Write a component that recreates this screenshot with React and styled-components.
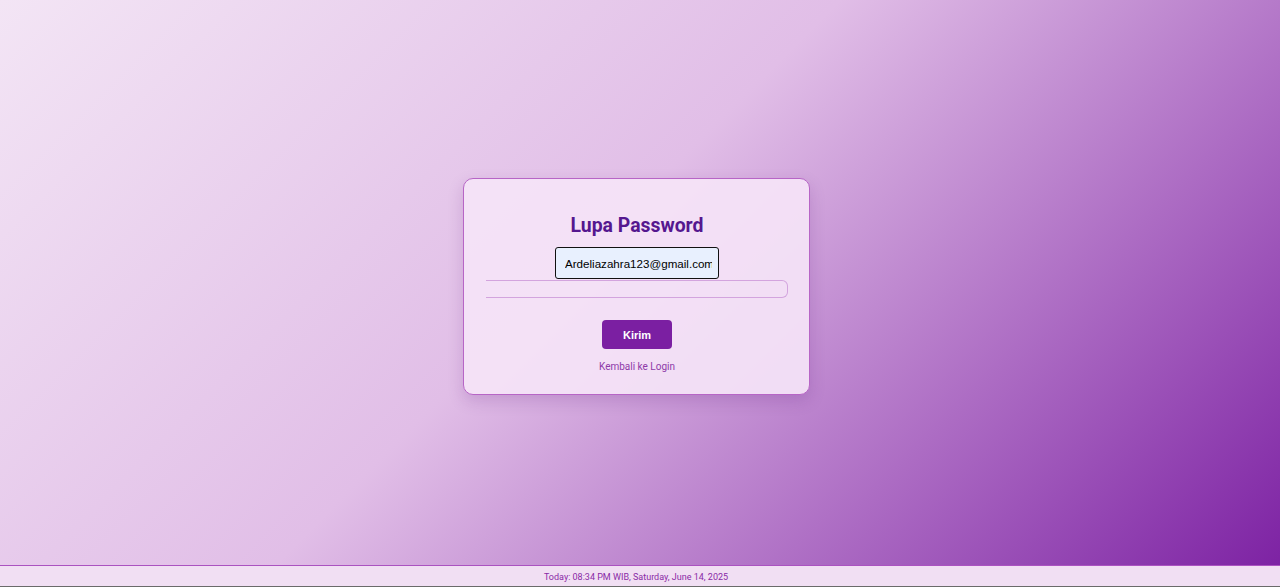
import styled, { createGlobalStyle } from "styled-components";

const GlobalStyle = createGlobalStyle`
    html, body {
        margin: 0;
        padding: 0;
        height: 100%;
    }

    body {
        font-family: Roboto, "Liberation Sans", Arial, sans-serif;
    }

    #root {
        height: 100%;
    }
`;

const Page = styled.div`
    display: flex;
    flex-direction: column;
    height: 100vh;
    background: linear-gradient(135deg, #f3e5f5 0%, #e1bee7 45%, #7b1fa2 100%);
    overflow: hidden;
`;

const Main = styled.main`
    flex: 1;
    display: flex;
    align-items: center;
    justify-content: center;
    padding: 8px 7px 0 0;
`;

const Card = styled.div`
    box-sizing: border-box;
    width: 347px;
    padding: 34px 21px 21px 22px;
    background: rgba(245, 228, 247, 0.92);
    border: 1px solid #b765c6;
    border-radius: 10px;
    box-shadow: 0 6px 16px rgba(90, 20, 120, 0.18);
    display: flex;
    flex-direction: column;
    align-items: center;
`;

const Title = styled.h2`
    margin: 1px 0 9px;
    font-size: 19.4px;
    line-height: 24px;
    font-weight: 700;
    color: #55178f;
`;

const EmailInput = styled.input`
    box-sizing: border-box;
    width: 164px;
    height: 32px;
    padding: 0 6px 0 9px;
    font-family: Arial, "Liberation Sans", sans-serif;
    font-size: 11.6px;
    color: #000;
    background: #e8f0fe;
    border: 1px solid #111;
    border-radius: 3px;
    outline: none;
`;

const FieldBar = styled.div`
    box-sizing: border-box;
    align-self: stretch;
    height: 18px;
    margin-top: 1px;
    border: 1px solid #d3a4de;
    border-left: none;
    border-radius: 0 6px 6px 0;
`;

const SubmitButton = styled.button`
    margin-top: 22px;
    width: 70px;
    height: 29px;
    border: none;
    border-radius: 4px;
    background: #7b1fa2;
    color: #fff;
    font-family: Arial, "Liberation Sans", sans-serif;
    font-size: 11px;
    font-weight: 700;
    cursor: pointer;
`;

const BackLink = styled.a`
    margin-top: 12px;
    font-size: 10px;
    line-height: 12px;
    color: #8e3aa8;
    text-decoration: none;
`;

const Footer = styled.footer`
    box-sizing: border-box;
    height: 22px;
    padding-top: 5px;
    padding-right: 8px;
    text-align: center;
    font-size: 9px;
    line-height: 12px;
    color: #8a2aa6;
    background: #f1dff3;
    border-top: 1px solid #ab52c0;
    border-bottom: 1px solid #6a6a6a;
`;

export default function App() {
    return (
        <>
            <GlobalStyle />
            <Page>
                <Main>
                    <Card>
                        <Title>Lupa Password</Title>
                        <EmailInput
                            type="email"
                            aria-label="Email"
                            value="Ardeliazahra123@gmail.com"
                            readOnly
                        />
                        <FieldBar />
                        <SubmitButton type="button">Kirim</SubmitButton>
                        <BackLink href="#">Kembali ke Login</BackLink>
                    </Card>
                </Main>
                <Footer>Today: 08:34 PM WIB, Saturday, June 14, 2025</Footer>
            </Page>
        </>
    );
}
